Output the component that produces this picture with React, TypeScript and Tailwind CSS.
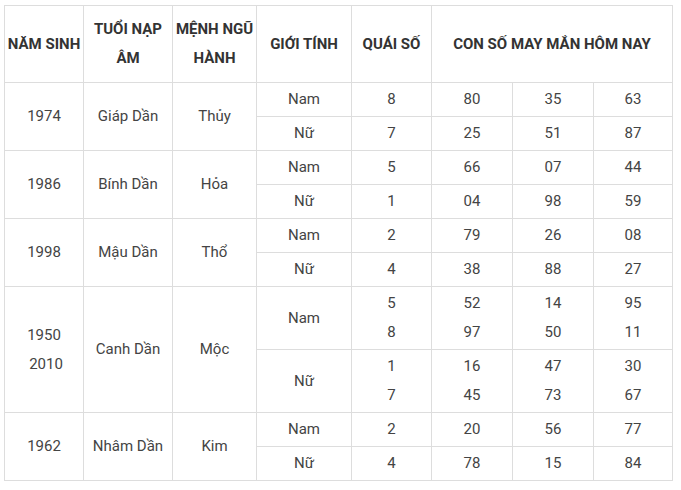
import React from "react";

type Sub = { g: string; q: string[]; n: string[][] };
type Row = { year: string[]; tuoi: string; menh: string; subs: Sub[]; tall?: boolean };

const rows: Row[] = [
  { year: ["1974"], tuoi: "Giáp Dần", menh: "Thủy", subs: [
    { g: "Nam", q: ["8"], n: [["80", "35", "63"]] },
    { g: "Nữ", q: ["7"], n: [["25", "51", "87"]] },
  ] },
  { year: ["1986"], tuoi: "Bính Dần", menh: "Hỏa", subs: [
    { g: "Nam", q: ["5"], n: [["66", "07", "44"]] },
    { g: "Nữ", q: ["1"], n: [["04", "98", "59"]] },
  ] },
  { year: ["1998"], tuoi: "Mậu Dần", menh: "Thổ", subs: [
    { g: "Nam", q: ["2"], n: [["79", "26", "08"]] },
    { g: "Nữ", q: ["4"], n: [["38", "88", "27"]] },
  ] },
  { year: ["1950", "2010"], tuoi: "Canh Dần", menh: "Mộc", tall: true, subs: [
    { g: "Nam", q: ["5", "8"], n: [["52", "14", "95"], ["97", "50", "11"]] },
    { g: "Nữ", q: ["1", "7"], n: [["16", "47", "30"], ["45", "73", "67"]] },
  ] },
  { year: ["1962"], tuoi: "Nhâm Dần", menh: "Kim", subs: [
    { g: "Nam", q: ["2"], n: [["20", "56", "77"]] },
    { g: "Nữ", q: ["4"], n: [["78", "15", "84"]] },
  ] },
];

const cell = "bg-white flex flex-col items-center justify-center text-center leading-[29px]";

export default function App() {
  const gridRows: string[] = ["76px"];
  rows.forEach((r) => {
    gridRows.push(r.tall ? "62px" : "33px", r.tall ? "62px" : "33px");
  });
  return (
    <div className="w-[681px] h-[490px] bg-white pt-[5px] pl-[4px]" style={{ fontFamily: "Roboto, 'Liberation Sans', sans-serif" }}>
      <div
        className="grid w-[669px] gap-px bg-[#dddddd] p-px text-[15px] text-[#444444] grid-cols-[78px_88px_83px_94px_79px_80px_80px_78px]"
        style={{ gridTemplateRows: gridRows.join(" ") }}
      >
        <div className={`${cell} font-bold text-[#333333]`}>NĂM SINH</div>
        <div className={`${cell} font-bold text-[#333333]`}><span>TUỔI NẠP</span><span>ÂM</span></div>
        <div className={`${cell} font-bold text-[#333333]`}><span>MỆNH NGŨ</span><span>HÀNH</span></div>
        <div className={`${cell} font-bold text-[#333333]`}>GIỚI TÍNH</div>
        <div className={`${cell} font-bold text-[#333333]`}>QUÁI SỐ</div>
        <div className={`${cell} font-bold text-[#333333] col-span-3`}>CON SỐ MAY MẮN HÔM NAY</div>
        {rows.map((r) => (
          <React.Fragment key={r.tuoi}>
            <div className={`${cell} row-span-2`}>
              {r.year.map((y, i) => (
                <span key={y} className={i === 1 ? "pl-1" : ""}>{y}</span>
              ))}
            </div>
            <div className={`${cell} row-span-2`}>{r.tuoi}</div>
            <div className={`${cell} row-span-2`}>{r.menh}</div>
            {r.subs.map((s) => (
              <React.Fragment key={s.g}>
                <div className={cell}>{s.g}</div>
                <div className={cell}>{s.q.map((q, i) => <span key={i}>{q}</span>)}</div>
                {[0, 1, 2].map((c) => (
                  <div key={c} className={cell}>
                    {s.n.map((line, i) => <span key={i}>{line[c]}</span>)}
                  </div>
                ))}
              </React.Fragment>
            ))}
          </React.Fragment>
        ))}
      </div>
    </div>
  );
}
